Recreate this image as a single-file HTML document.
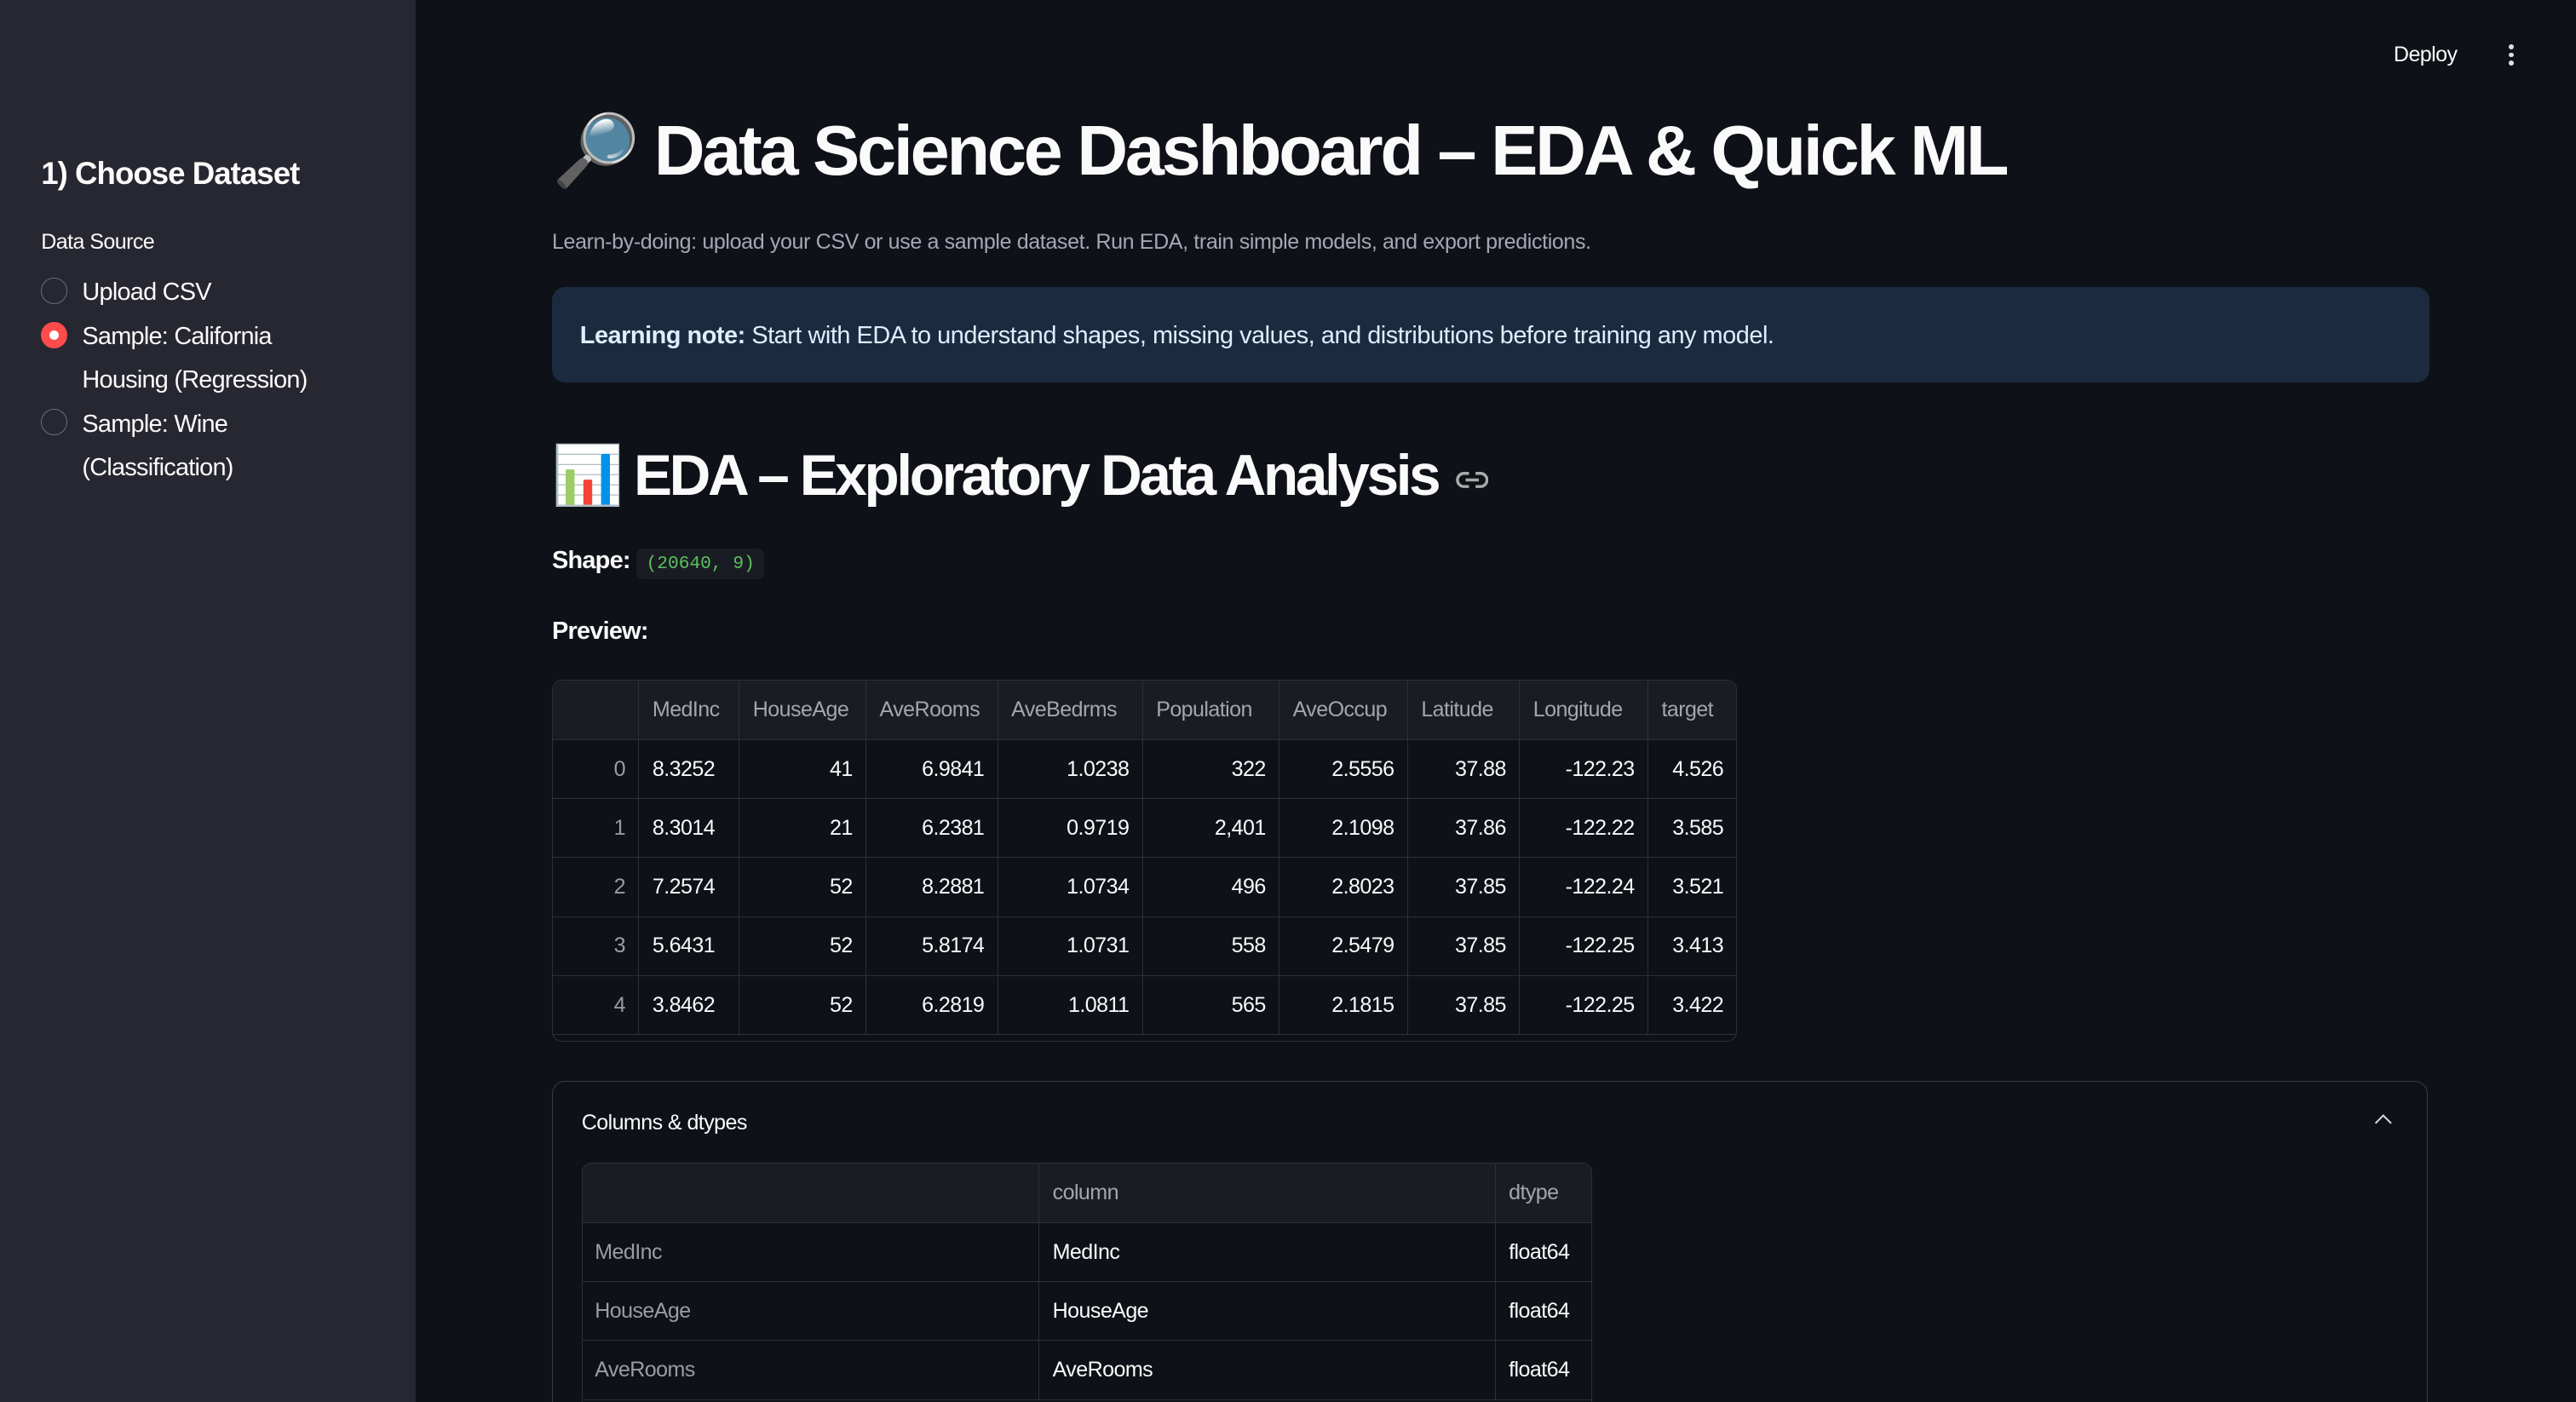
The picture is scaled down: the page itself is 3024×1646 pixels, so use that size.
<!DOCTYPE html>
<html><head><meta charset="utf-8"><style>
html,body{margin:0;padding:0;background:#0e1117;overflow:hidden}
body{width:3024px;height:1646px}
#root{zoom:1.92857;width:1568px;height:854px;position:relative;font-family:"Liberation Sans",sans-serif;color:#fafafa;overflow:hidden}
.side{position:absolute;left:0;top:0;width:253px;height:854px;background:#262730}
.abs{position:absolute;white-space:nowrap}
.radio{position:absolute;width:16px;height:16px;border-radius:50%;border:1px solid #6b6e78;box-sizing:border-box}
table{border-collapse:collapse;font-size:13px;position:absolute}
td{border:1px solid #2e3039;padding:0 8px;text-align:right;height:35.4px;letter-spacing:-0.3px}
td.i{color:#9a9ca3}
tr.h td{color:#a3a6ad;text-align:left;height:36px;background:#1a1c24}
.wrap{position:absolute;border:1px solid #2e3039;border-radius:6px;overflow:hidden}
</style></head><body><div id="root">
<div class="side">
<div class="abs" style="left:25px;top:95px;font-size:19px;font-weight:bold;letter-spacing:-0.5px">1) Choose Dataset</div>
<div class="abs" style="left:25px;top:140px;font-size:13px;letter-spacing:-0.3px">Data Source</div>
<div class="radio" style="left:25px;top:169px"></div>
<div class="radio" style="left:25px;top:196px;background:#ff4b4b;border:none"><div style="width:6px;height:6px;background:#fff;border-radius:50%;margin:5px"></div></div>
<div class="radio" style="left:25px;top:249px"></div>
<div class="abs" style="left:50px;top:165px;font-size:15px;line-height:26.7px;letter-spacing:-0.4px">Upload CSV<br>Sample: California<br>Housing (Regression)<br>Sample: Wine<br>(Classification)</div>
</div>
<div class="abs" style="left:1457px;top:26px;font-size:13px;letter-spacing:-0.3px">Deploy</div>
<div class="abs" style="left:1527px;top:27px;width:4px"><div style="width:3px;height:3px;background:#ddd;border-radius:50%;margin-bottom:2px"></div><div style="width:3px;height:3px;background:#ddd;border-radius:50%;margin-bottom:2px"></div><div style="width:3px;height:3px;background:#ddd;border-radius:50%"></div></div>
<div class="abs" style="left:336px;top:67px;font-size:43px;font-weight:bold;letter-spacing:-1.7px">🔎 Data Science Dashboard – EDA &amp; Quick ML</div>
<div class="abs" style="left:336px;top:140px;font-size:13px;color:#a3a8b4;letter-spacing:-0.2px">Learn-by-doing: upload your CSV or use a sample dataset. Run EDA, train simple models, and export predictions.</div>
<div class="abs" style="left:336px;top:175px;width:1143px;height:58px;background:#1c2a3f;border-radius:8px"></div>
<div class="abs" style="left:353px;top:196px;font-size:15px;color:#dbefff;letter-spacing:-0.25px"><b>Learning note:</b> Start with EDA to understand shapes, missing values, and distributions before training any model.</div>
<div class="abs" style="left:336px;top:269px;font-size:35px;font-weight:bold;letter-spacing:-1.75px">📊 EDA – Exploratory Data Analysis</div>
<svg class="abs" style="left:886px;top:285px" width="20" height="14" viewBox="0 0 20 14" fill="none" stroke="#aaa" stroke-width="1.8"><path d="M8 3H5a4 4 0 0 0 0 8h3M12 3h3a4 4 0 0 1 0 8h-3M6 7h8"/></svg>
<div class="abs" style="left:336px;top:333px;font-size:15px;font-weight:bold;letter-spacing:-0.4px">Shape: <span style="font-family:'Liberation Mono',monospace;font-weight:normal;font-size:11px;color:#5cc05c;background:#1a1c24;padding:3px 6px;border-radius:4px;letter-spacing:0">(20640, 9)</span></div>
<div class="abs" style="left:336px;top:376px;font-size:15px;font-weight:bold;letter-spacing:-0.4px">Preview:</div>
<div class="wrap" style="left:336px;top:414px;width:720px;height:219px">
<table style="left:-1px;top:-1px;width:722px">
<colgroup><col style="width:53px"><col style="width:61px"><col style="width:77px"><col style="width:80px"><col style="width:88px"><col style="width:83px"><col style="width:78px"><col style="width:68px"><col style="width:78px"><col style="width:54px"></colgroup>
<tr class="h"><td></td><td>MedInc</td><td>HouseAge</td><td>AveRooms</td><td>AveBedrms</td><td>Population</td><td>AveOccup</td><td>Latitude</td><td>Longitude</td><td>target</td></tr>
<tr><td class="i">0</td><td style="text-align:left">8.3252</td><td>41</td><td>6.9841</td><td>1.0238</td><td>322</td><td>2.5556</td><td>37.88</td><td>-122.23</td><td>4.526</td></tr>
<tr><td class="i">1</td><td style="text-align:left">8.3014</td><td>21</td><td>6.2381</td><td>0.9719</td><td>2,401</td><td>2.1098</td><td>37.86</td><td>-122.22</td><td>3.585</td></tr>
<tr><td class="i">2</td><td style="text-align:left">7.2574</td><td>52</td><td>8.2881</td><td>1.0734</td><td>496</td><td>2.8023</td><td>37.85</td><td>-122.24</td><td>3.521</td></tr>
<tr><td class="i">3</td><td style="text-align:left">5.6431</td><td>52</td><td>5.8174</td><td>1.0731</td><td>558</td><td>2.5479</td><td>37.85</td><td>-122.25</td><td>3.413</td></tr>
<tr><td class="i">4</td><td style="text-align:left">3.8462</td><td>52</td><td>6.2819</td><td>1.0811</td><td>565</td><td>2.1815</td><td>37.85</td><td>-122.25</td><td>3.422</td></tr>
</table></div>
<div class="abs" style="left:336px;top:658px;width:1141px;height:220px;border:1px solid #3a3c47;border-radius:8px"></div>
<div class="abs" style="left:354px;top:676px;font-size:13px;letter-spacing:-0.3px">Columns &amp; dtypes</div>
<div class="abs" style="left:1447px;top:680px;width:6px;height:6px;border-left:1.5px solid #ddd;border-top:1.5px solid #ddd;transform:rotate(45deg)"></div>
<div class="wrap" style="left:354px;top:708px;width:614px;height:160px">
<table style="left:-1px;top:-1px;width:616px">
<colgroup><col style="width:278px"><col style="width:277px"><col style="width:59px"></colgroup>
<tr class="h"><td></td><td>column</td><td>dtype</td></tr>
<tr><td class="i" style="text-align:left">MedInc</td><td style="text-align:left">MedInc</td><td style="text-align:left">float64</td></tr>
<tr><td class="i" style="text-align:left">HouseAge</td><td style="text-align:left">HouseAge</td><td style="text-align:left">float64</td></tr>
<tr><td class="i" style="text-align:left">AveRooms</td><td style="text-align:left">AveRooms</td><td style="text-align:left">float64</td></tr>
</table></div>
</div></body></html>
